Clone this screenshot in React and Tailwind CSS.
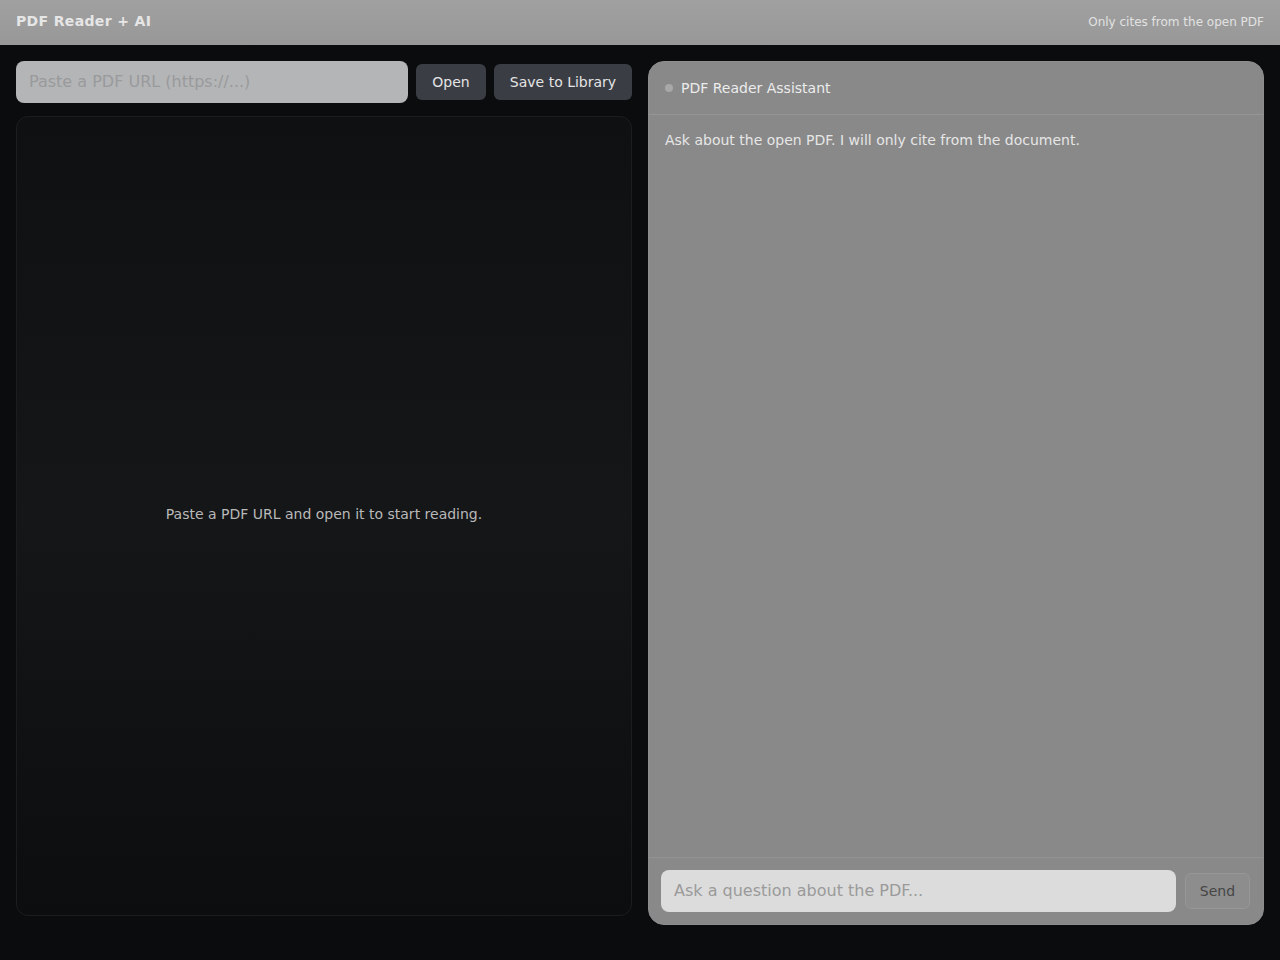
export default function App() {
  return (
    <div className="w-[1280px] h-[960px] bg-[#0b0c0e] flex flex-col" style={{ fontFamily: '"DejaVu Sans", sans-serif' }}>
      <header className="h-[45px] shrink-0 flex items-center justify-between px-4 pb-[2px] bg-gradient-to-b from-[#a0a0a0] to-[#989898]">
        <div className="text-[14px] font-bold text-[#e6e6e6] tracking-[0.35px]">PDF Reader + AI</div>
        <div className="text-[12px] text-[#e2e2e2]">Only cites from the open PDF</div>
      </header>
      <main className="flex gap-4 px-4 pt-4">
        <section className="w-[616px] flex flex-col gap-[13px]">
          <div className="flex items-center gap-2 h-[42px]">
            <input
              className="w-[392px] h-[42px] rounded-lg bg-[#b4b5b7] px-[13px] pb-[2px] text-[16px] text-[#333] placeholder:text-[#999a9c] outline-none"
              placeholder="Paste a PDF URL (https://...)"
            />
            <button className="h-[36px] w-[70px] rounded-md bg-[#3a3d44] text-[14px] text-[#e4e4e4] whitespace-nowrap">Open</button>
            <button className="h-[36px] w-[138px] rounded-md bg-[#3a3d44] text-[14px] text-[#e4e4e4] whitespace-nowrap">Save to Library</button>
          </div>
          <div className="h-[800px] rounded-xl border border-[#1c1d21] bg-gradient-to-b from-[#0f1012] via-[#151618] to-[#0c0d0f] flex items-center justify-center">
            <p className="text-[14px] text-[#b9b9b9] mb-[4px]">Paste a PDF URL and open it to start reading.</p>
          </div>
        </section>
        <section className="w-[616px] h-[864px] rounded-2xl border border-[#8d8d8d] bg-[#898989] flex flex-col overflow-hidden">
          <div className="h-[53px] shrink-0 flex items-center gap-2 px-4 border-b border-[#959595]">
            <span className="w-[8px] h-[8px] rounded-full bg-[#a8a8a8]"></span>
            <span className="text-[14px] text-[#ececec]">PDF Reader Assistant</span>
          </div>
          <div className="flex-1 px-4 pt-[15px]">
            <p className="text-[14px] text-[#e6e6e6]">Ask about the open PDF. I will only cite from the document.</p>
          </div>
          <div className="shrink-0 border-t border-[#939393] flex items-center gap-[9px] px-3 py-3">
            <input
              className="w-[515px] h-[42px] rounded-lg bg-[#dcdcdc] px-[13px] pb-[2px] text-[16px] text-[#333] placeholder:text-[#9a9a9a] outline-none"
              placeholder="Ask a question about the PDF..."
            />
            <button className="w-[65px] h-[36px] rounded-md bg-[#8d8d8d] border border-[#979797] text-[14px] text-[#454545]">Send</button>
          </div>
        </section>
      </main>
    </div>
  );
}
